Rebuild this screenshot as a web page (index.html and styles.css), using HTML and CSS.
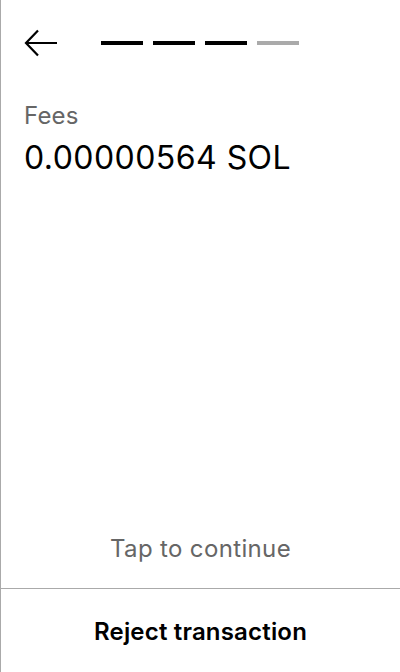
FILE: index.html
```html
<!DOCTYPE html>
<html>
<head>
<meta charset="utf-8">
<link rel="stylesheet" href="styles.css">
</head>
<body>
<div class="screen">
  <header class="top">
    <svg class="back" width="34" height="28" viewBox="0 0 34 28">
      <path d="M14 1.5 L2 14 L14 26.5 M2 14 H33" fill="none" stroke="#000" stroke-width="2.2"/>
    </svg>
    <div class="steps">
      <span class="step on"></span>
      <span class="step on"></span>
      <span class="step on"></span>
      <span class="step"></span>
    </div>
  </header>
  <section class="info">
    <div class="label">Fees</div>
    <div class="value">0.00000564 SOL</div>
  </section>
  <div class="tap">Tap to continue</div>
  <div class="reject">Reject transaction</div>
</div>
</body>
</html>
```
FILE: styles.css
```css
html, body { margin: 0; padding: 0; background: #fff; }
body { font-family: Inter, "Noto Sans", sans-serif; color: #000; }
.screen {
  width: 400px; height: 672px; box-sizing: border-box;
  border-left: 1px solid #aaa;
  display: flex; flex-direction: column;
}
.top {
  display: flex; align-items: center;
  padding: 29px 0 0 23px; height: 28px;
}
.back { display: block; }
.steps { display: flex; gap: 10px; margin-left: 43px; }
.step { width: 42px; height: 4px; background: #aaa; }
.step.on { background: #000; }
.info { padding: 44px 0 0 23px; }
.label { font-size: 24px; color: #666; line-height: 29px; letter-spacing: 0.2px; }
.value { font-size: 32px; line-height: 39px; margin-top: 8px; letter-spacing: 0.45px; }
.tap {
  margin-top: auto; text-align: center; font-size: 24px; color: #666;
  line-height: 29px; padding-bottom: 25px; letter-spacing: 0.35px;
}
.reject {
  border-top: 1px solid #aaa; height: 84px; display: flex; align-items: center;
  justify-content: center; font-size: 24px; font-weight: 600; line-height: 29px;
  letter-spacing: 0.18px; padding-top: 2px; box-sizing: border-box;
}
```
